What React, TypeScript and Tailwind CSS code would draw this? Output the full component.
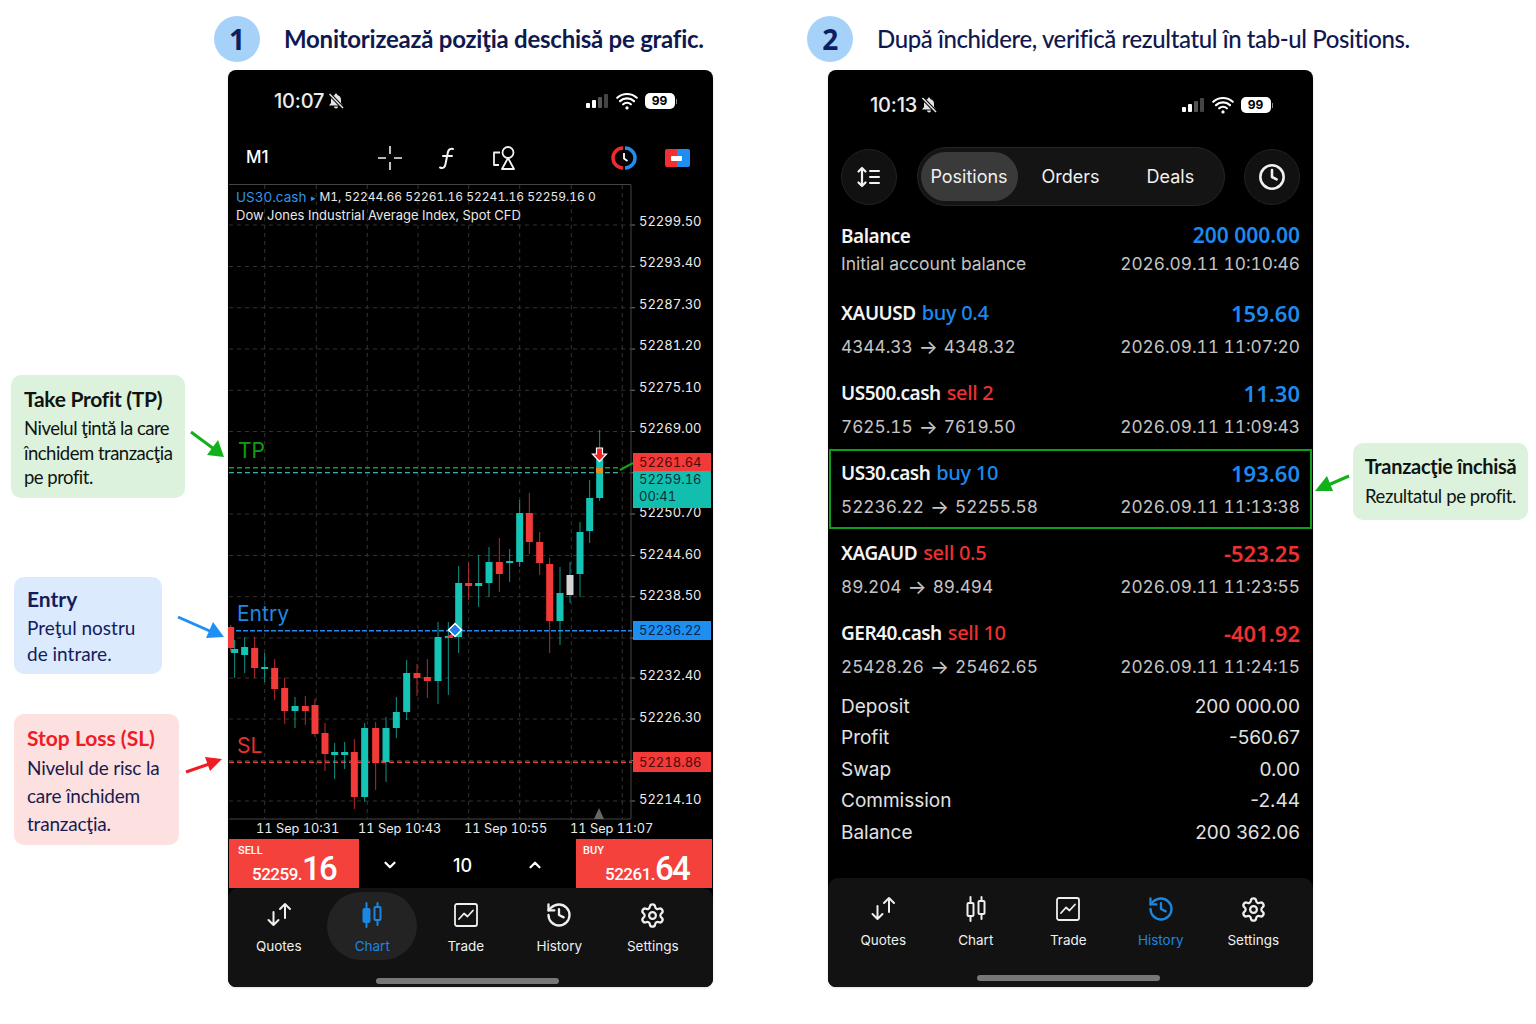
import { Clock, History, Settings, ChevronDown, ChevronUp } from 'lucide-react'
import { IoWifi } from 'react-icons/io5'

const sans = "font-['Inter',sans-serif]"
const noto = "font-['Noto_Sans',sans-serif]"
const lato = "font-['Lato',sans-serif]"

// [x in zoom units, wick top, body top, body bottom, wick bottom, colour]
const candles: [number, number, number, number, number, string][] = [
  [8, 625, 627, 648, 652, 'r'], [20, 640, 649, 653, 678, 't'], [50, 637, 647, 655, 673, 't'], [80, 637, 648, 668, 678, 'r'],
  [110, 653, 667, 669, 682, 't'], [140, 659, 668, 689, 700, 'r'], [170, 678, 688, 711, 724, 'r'], [201, 697, 706, 711, 728, 't'],
  [232, 696, 706, 711, 725, 'r'], [261, 699, 705, 734, 737, 'r'], [291, 723, 733, 754, 771, 'r'], [320, 743, 752, 755, 779, 't'],
  [350, 742, 752, 755, 769, 't'], [379, 739, 752, 797, 809, 'r'], [410, 723, 728, 797, 802, 't'], [443, 722, 728, 763, 790, 'r'],
  [474, 717, 728, 762, 782, 't'], [505, 697, 712, 728, 738, 't'], [536, 660, 673, 712, 720, 't'], [567, 664, 673, 678, 696, 'r'],
  [598, 659, 677, 681, 698, 'r'], [630, 622, 637, 681, 704, 't'], [661, 622, 636, 638, 695, 't'], [692, 566, 583, 637, 653, 't'],
  [722, 563, 583, 586, 600, 'r'], [752, 555, 583, 586, 607, 't'], [783, 547, 562, 583, 597, 't'], [814, 538, 562, 574, 592, 'r'],
  [845, 549, 561, 563, 582, 't'], [875, 500, 513, 562, 567, 't'], [904, 493, 513, 542, 554, 'r'], [935, 532, 542, 563, 575, 'r'],
  [965, 558, 564, 621, 653, 'r'], [996, 567, 593, 621, 645, 't'], [1026, 562, 575, 595, 603, 'w'], [1056, 522, 532, 574, 597, 't'],
  [1085, 480, 498, 531, 543, 't'], [1115, 430, 459, 498, 501, 't'],
]
const candleColor: Record<string, string> = { r: '#f23a38', t: '#14c4b4', w: '#d6d6d6' }
const gridY = [225, 266.5, 307.75, 349, 390.25, 431.5, 472.75, 514, 555.5, 596.7, 638, 678, 719, 760.5, 801]
const gridX = [264.7, 316.3, 367.3, 418, 468.7, 519.7, 571.3, 622.3]
const prices: [string, number][] = [
  ['52299.50', 221], ['52293.40', 262], ['52287.30', 304], ['52281.20', 345], ['52275.10', 387], ['52269.00', 428],
  ['52250.70', 512], ['52244.60', 554], ['52238.50', 595], ['52232.40', 675], ['52226.30', 717], ['52214.10', 799],
]

function CandleChart() {
  return (
    <svg className="absolute inset-0" width="485" height="655" viewBox="228 184 485 655">
      {gridY.map((y) => (
        <g key={y}>
          <line x1="229" x2="631" y1={y} y2={y} stroke="#333" strokeDasharray="4 4" />
          <line x1="631" x2="635" y1={y} y2={y} stroke="#777" />
        </g>
      ))}
      {gridX.map((x) => (
        <line key={x} x1={x} x2={x} y1="185" y2="819" stroke="#333" strokeDasharray="4 4" />
      ))}
      <path d="M229 184.5H631V819H229" fill="none" stroke="#444" />
      <line x1="229" x2="620" y1="467.7" y2="467.7" stroke="#16a316" strokeWidth="1.5" strokeDasharray="5 3" />
      <line x1="229" x2="620" y1="472.7" y2="472.7" stroke="#3aa9b0" strokeWidth="1.2" strokeDasharray="5 3" />
      <path d="M620 470L633 463" stroke="#16a316" strokeWidth="2" />
      <line x1="229" x2="632" y1="630.7" y2="630.7" stroke="#1e8ff0" strokeWidth="1.5" strokeDasharray="5 2" />
      <line x1="229" x2="632" y1="762.3" y2="762.3" stroke="#f23a38" strokeWidth="1.5" strokeDasharray="5 3" />
      {candles.map(([zx, wt, bt, bb, wb, c]) => {
        const x = 228 + zx / 3
        return (
          <g key={zx}>
            <line x1={x} x2={x} y1={wt} y2={wb} stroke={c === 'w' ? '#14c4b4' : candleColor[c]} strokeOpacity="0.75" />
            <rect x={x - 3.5} y={bt} width="7" height={bb - bt} fill={candleColor[c]} />
          </g>
        )
      })}
      <rect x="596" y="468" width="7" height="5" fill="#e0902a" />
      <path d="M445 638L453 633L453 638Z" fill="#f23a38" />
      <path d="M455 623.5L461.5 630L455 636.5L448.5 630Z" fill="#1e7fe8" stroke="#fff" strokeWidth="1.5" />
      <path d="M596.5 448H602.5V454H606.5L599.5 461.5L592.5 454H596.5Z" fill="#f0242a" stroke="#fff" strokeWidth="1.2" />
      <path d="M599 808L604 819H594Z" fill="#666" />
    </svg>
  )
}

function StatusBar({ time }: { time: string }) {
  return (
    <div className="flex items-center text-white">
      <span className={`${sans} text-[20px] leading-6 font-medium tracking-[-0.2px] text-[#ececec]`}>{time}</span>
      <svg className="ml-[3px]" width="18" height="18" viewBox="0 0 18 18">
        <path d="M9 1.5A1.2 1.2 0 0 1 10.2 3A5 5 0 0 1 14 8V11L16 13.5H2L4 11V8A5 5 0 0 1 7.8 3A1.2 1.2 0 0 1 9 1.5Z" fill="#e4e4e4" />
        <path d="M7 14.5A2 2 0 0 0 11 14.5Z" fill="#e4e4e4" />
        <path d="M2.5 2L16 16" stroke="#000" strokeWidth="3.4" />
        <path d="M2.5 2L16 16" stroke="#e4e4e4" strokeWidth="1.5" />
      </svg>
    </div>
  )
}

function SignalIcons() {
  return (
    <div className="flex items-center">
      <div className="flex items-end gap-[2px]">
        <div className="h-[5px] w-[4px] rounded-[1px] bg-white" />
        <div className="h-[8px] w-[4px] rounded-[1px] bg-white" />
        <div className="h-[11px] w-[4px] rounded-[1px] bg-[#555]" />
        <div className="h-[14px] w-[4px] rounded-[1px] bg-[#444]" />
      </div>
      <IoWifi className="ml-[6px] text-white" size={26} />
      <div className={`${sans} ml-[5px] flex h-[16px] w-[30px] items-center justify-center rounded-[5px] bg-white text-[12px] font-bold text-black`}>99</div>
      <div className="ml-[1px] h-[5px] w-[1.5px] bg-[#888]" />
    </div>
  )
}

function QuotesIcon() {
  return (
    <svg width="28" height="28" viewBox="0 0 28 28" fill="none" stroke="currentColor" strokeWidth="2" strokeLinecap="round" strokeLinejoin="round">
      <path d="M8.5 11V24M3.5 19L8.5 24L13.5 19" />
      <path d="M20 3V17M15 8L20 3L25 8" />
    </svg>
  )
}
function ChartIcon({ filled }: { filled?: boolean }) {
  return (
    <svg width="28" height="28" viewBox="0 0 28 28" fill="none" stroke="currentColor" strokeWidth="2" strokeLinecap="round">
      <path d="M8.5 2V26M19.5 2V24" />
      <rect x="5.5" y="8" width="6" height="13" rx="1" fill={filled ? 'currentColor' : '#121212'} />
      <rect x="16.5" y="6" width="6" height="13" rx="1" fill={filled ? '#232323' : '#121212'} />
    </svg>
  )
}
function TradeIcon() {
  return (
    <svg width="28" height="28" viewBox="0 0 28 28" fill="none" stroke="currentColor" strokeWidth="1.8" strokeLinecap="round" strokeLinejoin="round">
      <rect x="3" y="3" width="22" height="22" rx="2" />
      <path d="M7 18L12 12.5L15.5 15.5L21 9.5" />
    </svg>
  )
}

type NavItem = { label: string; icon: React.ReactNode; active?: boolean }

function BottomNav({ items, pill, itemClass }: { items: NavItem[]; pill?: boolean; itemClass: string }) {
  return (
    <div className="flex">
      {items.map((it) => (
        <div key={it.label} className={`relative flex flex-col items-center ${itemClass} ${it.active ? 'text-[#1c86e0]' : 'text-[#efefef]'}`}>
          {it.active && pill && <div className="absolute top-[-9px] h-[68px] w-[90px] rounded-[34px] bg-[#232323]" />}
          <div className="relative flex h-[28px] items-center justify-center">{it.icon}</div>
          <span className={`${sans} relative mt-[8px] text-[13.5px] leading-[18px]`}>{it.label}</span>
        </div>
      ))}
    </div>
  )
}

function navItems(active: string): NavItem[] {
  return [
    { label: 'Quotes', icon: <QuotesIcon />, active: active === 'Quotes' },
    { label: 'Chart', icon: <ChartIcon filled={active === 'Chart'} />, active: active === 'Chart' },
    { label: 'Trade', icon: <TradeIcon />, active: active === 'Trade' },
    { label: 'History', icon: <History size={28} strokeWidth={2} />, active: active === 'History' },
    { label: 'Settings', icon: <Settings size={27} strokeWidth={2} />, active: active === 'Settings' },
  ]
}

function PriceBox({ side, big, small }: { side: string; big: string; small: string }) {
  return (
    <div className={`flex h-full flex-col bg-[#f5413c] text-white ${side === 'SELL' ? 'w-[130px] pl-[9px]' : 'w-[136px] pl-[7px]'}`}>
      <span className="font-['Roboto',sans-serif] mt-[5px] text-[11px] leading-[13px] font-medium">{side}</span>
      <div className="font-['Roboto',sans-serif] mt-[-7px] flex items-baseline justify-end pr-[23px] font-medium">
        <span className="text-[17px] tracking-[-0.5px]">{small}</span>
        <span className="text-[33px] leading-[38px] tracking-[-1.8px]">{big}</span>
      </div>
    </div>
  )
}

function ChartPhone() {
  return (
    <div className="flex h-[917px] w-[485px] flex-col overflow-hidden rounded-[8px] bg-black shadow-sm">
      <div className="flex h-[62px] items-center justify-between pl-[46px] pr-[36px]">
        <StatusBar time="10:07" />
        <SignalIcons />
      </div>
      <div className="relative flex h-[52px] items-center text-white">
        <span className={`${sans} ml-[18px] text-[17px] font-medium`}>M1</span>
        <svg className="ml-[108px]" width="26" height="26" viewBox="0 0 26 26" fill="none" stroke="#f2f2f2" strokeWidth="1.6">
          <path d="M1 13H9M17 13H25M13 1V9M13 17V25" />
        </svg>
        <svg className="ml-[32px]" width="24" height="24" viewBox="0 0 24 24" fill="none" stroke="#f2f2f2" strokeWidth="2" strokeLinecap="round">
          <path d="M18 3C14 2 13 5 12.5 8L10.5 18C10 21 8 23 5 21.5M8 10H17" />
        </svg>
        <svg className="ml-[33px]" width="26" height="26" viewBox="0 0 26 26" fill="none" stroke="#f2f2f2" strokeWidth="1.8" strokeLinejoin="round">
          <circle cx="16" cy="7.5" r="5.5" />
          <path d="M16 13L22 24H10Z" />
          <path d="M8 7.5H2V20H7" />
        </svg>
        <svg className="ml-[93px]" width="26" height="26" viewBox="0 0 26 26" fill="none">
          <path d="M12 3A10 10 0 0 0 12 23" stroke="#ee2c2c" strokeWidth="3.5" />
          <path d="M14 3A10 10 0 0 1 14 23" stroke="#1f8ef1" strokeWidth="3.5" />
          <path d="M13 8V13.5L16.5 16" stroke="#fff" strokeWidth="1.8" />
        </svg>
        <div className="ml-[28px] flex h-[18px] w-[25px] overflow-hidden rounded-[2px]">
          <div className="w-1/2 bg-[#ee3030]" />
          <div className="w-1/2 bg-[#1f8ef1]" />
        </div>
        <div className="absolute left-[443px] top-[24px] h-[5px] w-[11px] rounded-[1px] bg-white" />
      </div>

      <div className="relative h-[655px]">
        <CandleChart />
        <div className={`${sans} absolute left-[8px] top-[4px] text-[13px] leading-[18px] tabular-nums text-[#e8e8e8]`}>
          <div className="flex h-[18px] items-center whitespace-nowrap">
            <span className="text-[13.5px] text-[#2e95ea]">US30.cash</span>
            <span className="ml-[5px] mr-[3px] text-[9px] leading-none text-[#2e95ea]">▸</span>
            <span className="text-[12px]">M1, 52244.66 52261.16 52241.16 52259.16 0</span>
          </div>
          <div className="whitespace-nowrap">Dow Jones Industrial Average Index, Spot CFD</div>
        </div>
        <span className={`${sans} absolute left-[10px] top-[253px] text-[21px] leading-7 text-[#0fa00f]`}>TP</span>
        <span className={`${sans} absolute left-[9px] top-[416px] text-[21px] leading-7 text-[#1e88e5]`}>Entry</span>
        <span className={`${sans} absolute left-[9px] top-[548px] text-[21px] leading-7 text-[#e53030]`}>SL</span>
        {prices.map(([p, y]) => (
          <span key={p} className={`${sans} absolute left-[411px] text-[13px] leading-4 tabular-nums text-[#ececec]`} style={{ top: y - 184 - 8 }}>{p}</span>
        ))}
        <div className={`${sans} absolute left-[405px] top-[269px] h-[18px] w-[78px] bg-[#f23a38] pl-[6px] text-[13px] leading-[18px] tabular-nums text-[#4a0a0a]`}>52261.64</div>
        <div className={`${sans} absolute left-[405px] top-[287px] h-[37px] w-[78px] bg-[#12bfae] pl-[6px] text-[13px] leading-[17px] tabular-nums text-[#07323a]`}>
          <div>52259.16</div>
          <div>00:41</div>
        </div>
        <div className={`${sans} absolute left-[405px] top-[437px] h-[19px] w-[78px] bg-[#1e8ff0] pl-[6px] text-[13px] leading-[19px] tabular-nums text-[#06264a]`}>52236.22</div>
        <div className={`${sans} absolute left-[405px] top-[568px] h-[20px] w-[78px] bg-[#f23a38] pl-[6px] text-[13px] leading-[20px] tabular-nums text-[#4a0a0a]`}>52218.86</div>
        <span className={`${sans} absolute left-[28px] top-[637px] text-[12.75px] leading-4 tabular-nums text-[#ececec]`}>11 Sep 10:31</span>
        <span className={`${sans} absolute left-[130px] top-[637px] text-[12.75px] leading-4 tabular-nums text-[#ececec]`}>11 Sep 10:43</span>
        <span className={`${sans} absolute left-[236px] top-[637px] text-[12.75px] leading-4 tabular-nums text-[#ececec]`}>11 Sep 10:55</span>
        <span className={`${sans} absolute left-[342px] top-[637px] text-[12.75px] leading-4 tabular-nums text-[#ececec]`}>11 Sep 11:07</span>
      </div>

      <div className="flex h-[49px] items-stretch pl-[1px] pr-[1px]">
        <PriceBox side="SELL" small="52259." big="16" />
        <div className="flex flex-1 items-center justify-between pl-[22px] pr-[32px] pt-[3px] text-white">
          <ChevronDown size={18} strokeWidth={3} />
          <span className={`${sans} text-[18px] font-medium`}>10</span>
          <ChevronUp size={18} strokeWidth={3} />
        </div>
        <PriceBox side="BUY" small="52261." big="64" />
      </div>

      <div className="flex flex-1 flex-col rounded-t-[10px] bg-[#121212] pl-[4px] pt-[13px]">
        <BottomNav items={navItems('Chart')} pill itemClass="w-[93.5px]" />
        <div className="ml-[144px] mt-[23px] h-[6px] w-[183px] rounded-full bg-[#777]" />
      </div>
    </div>
  )
}

type Row = { name: string; side: string; sideColor: string; amount: string; amountColor: string; from: string; to: string; time: string; highlight?: boolean }

const blue = 'text-[#1c8aef]'
const red = 'text-[#ee3030]'
const rows: Row[] = [
  { name: 'XAUUSD', side: 'buy 0.4', sideColor: blue, amount: '159.60', amountColor: blue, from: '4344.33', to: '4348.32', time: '2026.09.11 11:07:20' },
  { name: 'US500.cash', side: 'sell 2', sideColor: red, amount: '11.30', amountColor: blue, from: '7625.15', to: '7619.50', time: '2026.09.11 11:09:43' },
  { name: 'US30.cash', side: 'buy 10', sideColor: blue, amount: '193.60', amountColor: blue, from: '52236.22', to: '52255.58', time: '2026.09.11 11:13:38', highlight: true },
  { name: 'XAGAUD', side: 'sell 0.5', sideColor: red, amount: '-523.25', amountColor: red, from: '89.204', to: '89.494', time: '2026.09.11 11:23:55' },
  { name: 'GER40.cash', side: 'sell 10', sideColor: red, amount: '-401.92', amountColor: red, from: '25428.26', to: '25462.65', time: '2026.09.11 11:24:15' },
]
const summary = [
  ['Deposit', '200 000.00'],
  ['Profit', '-560.67'],
  ['Swap', '0.00'],
  ['Commission', '-2.44'],
  ['Balance', '200 362.06'],
]

function HistoryPhone() {
  return (
    <div className="flex h-[917px] w-[485px] flex-col overflow-hidden rounded-[8px] bg-black shadow-sm">
      <div className="flex h-[70px] shrink-0 items-center justify-between pl-[42px] pr-[40px]">
        <StatusBar time="10:13" />
        <SignalIcons />
      </div>
      <div className="mt-[7px] flex h-[59px] shrink-0 items-center justify-between px-[13px] text-[#f0f0f0]">
        <div className="flex h-[56px] w-[56px] items-center justify-center rounded-full border border-[#222] bg-[#111]">
          <svg width="26" height="26" viewBox="0 0 26 26" fill="none" stroke="#f2f2f2" strokeWidth="2.2" strokeLinecap="round" strokeLinejoin="round">
            <path d="M6 4V22M2.5 7.5L6 4L9.5 7.5M2.5 18.5L6 22L9.5 18.5" />
            <path d="M14 7H23M14 13H23M14 19H23" strokeWidth="2" />
          </svg>
        </div>
        <div className={`${sans} flex h-[59px] w-[308px] items-center rounded-full border border-[#252525] bg-[#141414] pl-[3px] text-[18px]`}>
          <div className="flex h-[49px] w-[97px] items-center justify-center rounded-full bg-[#3a3a3a]">Positions</div>
          <span className="ml-[24px]">Orders</span>
          <span className="ml-[47px]">Deals</span>
        </div>
        <div className="flex h-[56px] w-[56px] items-center justify-center rounded-full border border-[#222] bg-[#111]">
          <Clock size={28} strokeWidth={2.2} />
        </div>
      </div>

      <div className="mt-[8px] flex h-[75px] shrink-0 flex-col gap-[4px] px-[13px] pt-[10px]">
        <div className="flex h-6 items-center justify-between">
          <span className={`${noto} text-[19px] font-semibold tracking-[-0.5px] text-[#f4f4f4]`}>Balance</span>
          <span className={`${noto} text-[21px] font-semibold ${blue}`}>200 000.00</span>
        </div>
        <div className={`${sans} flex h-6 items-center justify-between text-[17.5px] text-[#c4c4c4]`}>
          <span>Initial account balance</span>
          <span className="text-[17.25px] tabular-nums">2026.09.11 10:10:46</span>
        </div>
      </div>

      {rows.map((r) => (
        <div key={r.name} className={`flex h-[80px] shrink-0 flex-col gap-[10px] px-[13px] pt-[12px] ${r.highlight ? 'relative' : ''}`}>
          {r.highlight && <div className="absolute inset-x-[1px] inset-y-0 border-2 border-[#0f9e1c]" />}
          <div className="flex h-6 items-center justify-between">
            <div className={`${noto} flex items-baseline gap-[6px]`}>
              <span className="text-[19px] font-semibold tracking-[-0.5px] text-[#f4f4f4]">{r.name}</span>
              <span className={`text-[20px] font-medium tracking-[-0.3px] ${r.sideColor}`}>{r.side}</span>
            </div>
            <span className={`${noto} text-[22px] font-semibold ${r.amountColor}`}>{r.amount}</span>
          </div>
          <div className={`${sans} flex h-6 items-center justify-between text-[17.25px] tabular-nums text-[#c4c4c4]`}>
            <div className="flex items-center">
              <span>{r.from}</span>
              <span className="mx-[6px] text-[20px] leading-6">→</span>
              <span>{r.to}</span>
            </div>
            <span>{r.time}</span>
          </div>
        </div>
      ))}

      <div className={`${sans} mt-[2px] px-[13px] text-[19px] text-[#e2e2e2]`}>
        {summary.map(([label, value]) => (
          <div key={label} className="flex h-[31.5px] items-center justify-between">
            <span>{label}</span>
            <span>{value}</span>
          </div>
        ))}
      </div>

      <div className="mt-auto flex h-[109px] shrink-0 flex-col rounded-t-[10px] bg-[#121212] pl-[9px] pt-[17px]">
        <BottomNav items={navItems('History')} itemClass="w-[92.5px]" />
        <div className="ml-[140px] mt-[26px] h-[6px] w-[183px] rounded-full bg-[#777]" />
      </div>
    </div>
  )
}

function Header({ n, text, className }: { n: string; text: string; className: string }) {
  return (
    <div className={`flex h-[46px] items-center ${className}`}>
      <div className={`${noto} flex h-[46px] w-[46px] shrink-0 items-center justify-center rounded-full bg-[#a6d2fa] text-[28px] font-bold text-[#0d1f5c]`}>{n}</div>
      <span className={`${lato} whitespace-nowrap text-[#10194f]`}>{text}</span>
    </div>
  )
}

export default function App() {
  return (
    <div className="relative flex h-[1024px] w-[1536px] overflow-hidden bg-white">
      <div className={`${lato} flex w-[228px] shrink-0 flex-col items-start whitespace-nowrap pt-[375px]`}>
        <div className="ml-[11px] h-[123px] w-[174px] rounded-[10px] bg-[#dcf2dc] pl-[13px] pt-[11px] text-[#101410]">
          <div className="text-[21px] leading-[26px] font-bold tracking-[-0.3px]">Take Profit (TP)</div>
          <div className="mt-[4px] text-[18.5px] leading-[24.5px] tracking-[-0.5px]">Nivelul ţintă la care<br />închidem tranzacţia<br />pe profit.</div>
        </div>
        <div className="ml-[14px] mt-[79px] h-[97px] w-[148px] rounded-[10px] bg-[#dbeafc] pl-[13px] pt-[9px] text-[#141c5c]">
          <div className="text-[21px] leading-[26px] font-bold">Entry</div>
          <div className="mt-[3px] text-[19px] leading-[26px]">Preţul nostru<br />de intrare.</div>
        </div>
        <div className="ml-[14px] mt-[40px] h-[131px] w-[165px] rounded-[10px] bg-[#fde0e0] pl-[13px] pt-[11px] text-[#171c4f]">
          <div className="text-[21px] leading-[26px] font-bold text-[#ee1c25]">Stop Loss (SL)</div>
          <div className="mt-[3px] text-[19px] leading-[28px] tracking-[-0.2px]">Nivelul de risc la<br />care închidem<br />tranzacţia.</div>
        </div>
      </div>

      <div className="w-[485px] shrink-0">
        <Header n="1" text="Monitorizează poziţia deschisă pe grafic." className="-ml-[14px] mb-[8px] mt-[16px] gap-[24px] text-[24px] font-bold tracking-[-0.25px]" />
        <ChartPhone />
      </div>

      <div className="ml-[115px] w-[485px] shrink-0">
        <Header n="2" text="După închidere, verifică rezultatul în tab-ul Positions." className="-ml-[21px] mb-[8px] mt-[16px] gap-[24px] text-[24px] font-medium tracking-[-0.4px]" />
        <HistoryPhone />
      </div>

      <div className={`${lato} ml-[40px] mt-[443px] flex h-[77px] w-[175px] shrink-0 flex-col items-center whitespace-nowrap rounded-[10px] bg-[#dcf2dc] pt-[10px] text-[#101410]`}>
        <div className="text-[20px] leading-[26px] font-bold tracking-[-0.3px]">Tranzacţie închisă</div>
        <div className="mt-[4px] text-[18.5px] leading-[26px] tracking-[-0.4px]">Rezultatul pe profit.</div>
      </div>

      <svg className="pointer-events-none absolute inset-0" width="1536" height="1024" viewBox="0 0 1536 1024" fill="none">
        <path d="M191 432L214 449" stroke="#12b01a" strokeWidth="3" />
        <path d="M224 457L207 455L218 440Z" fill="#12b01a" />
        <path d="M178 617L212 632" stroke="#1e90f5" strokeWidth="3" />
        <path d="M224 637L206 638L213 622Z" fill="#1e90f5" />
        <path d="M186 772L212 763" stroke="#f01c24" strokeWidth="3" />
        <path d="M222 759L210 771L205 757Z" fill="#f01c24" />
        <path d="M1349 476L1326 486" stroke="#12b01a" strokeWidth="3" />
        <path d="M1315 491L1327 476L1333 491Z" fill="#12b01a" />
      </svg>
    </div>
  )
}
